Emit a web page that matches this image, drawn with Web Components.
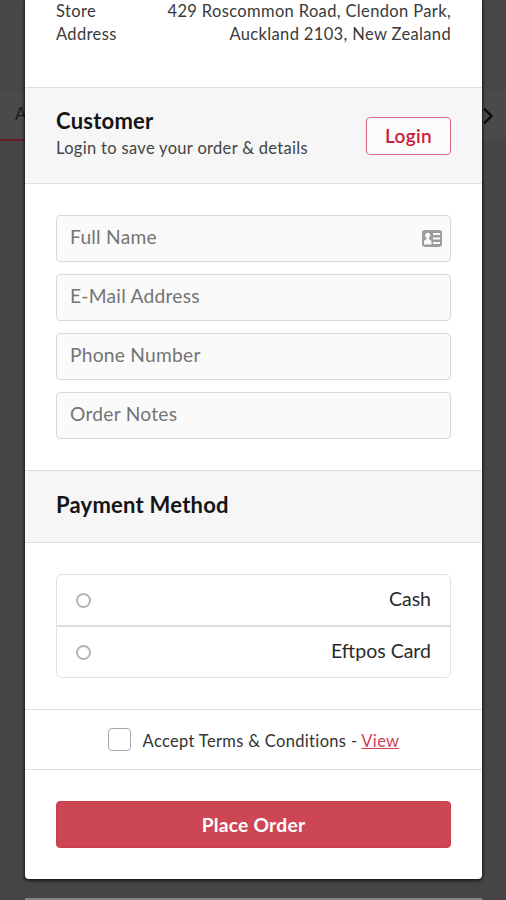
<!DOCTYPE html>
<html lang="en">
<head>
<meta charset="utf-8">
<title>Checkout</title>
<style>
    html, body {
        margin: 0;
        height: 100%;
        overflow: hidden;
    }

    body {
        font-family: Lato, "Liberation Sans", sans-serif;
        color: #222;
        background: #454545;
    }
</style>
</head>
<body>
<store-backdrop></store-backdrop>
<checkout-modal>
    <store-address label="Store Address">429 Roscommon Road, Clendon Park,<br>Auckland 2103, New Zealand</store-address>
    <section-header heading="Customer" style="height: 97px">
        <span slot="detail">Login to save your order &amp; details</span>
        <outline-button slot="action">Login</outline-button>
    </section-header>
    <field-list>
        <form-field icon>Full Name</form-field>
        <form-field>E-Mail Address</form-field>
        <form-field>Phone Number</form-field>
        <form-field>Order Notes</form-field>
    </field-list>
    <section-header heading="Payment Method" style="height: 73px"></section-header>
    <payment-options>
        <payment-option>Cash</payment-option>
        <payment-option>Eftpos Card</payment-option>
    </payment-options>
    <terms-row link="View">Accept Terms &amp; Conditions -</terms-row>
    <place-order>Place Order</place-order>
</checkout-modal>

<script>
function define(name, html) {
    customElements.define(name, class extends HTMLElement {
        constructor() {
            super();
            this.attachShadow({mode: "open"});
        }

        connectedCallback() {
            this.shadowRoot.innerHTML = `<style>:host, * { box-sizing: border-box; margin: 0; }</style>` + html(this);
        }
    });
}

// dimmed store page behind the dialog
define("store-backdrop", () => `
    <style>
    :host {
        display: flex;
        flex-direction: column;
        height: 900px;
        background: #454545;
    }

    .top {
        height: 88px;
        background: #474747;
    }

    .tabs {
        display: flex;
        justify-content: space-between;
        height: 54px;
        background: #4a4a4a;
        border-top: 1px solid #444;
        border-bottom: 1px solid #444;
    }

    .tab {
        width: 60px;
        padding: 15px 0 0 15px;
        font-size: 17px;
        line-height: 20px;
        color: #1b1b1b;
        border-bottom: 2px solid #681c26;
    }

    svg {
        margin: 17px 10px 0 0;
    }

    .next {
        height: 2px;
        margin: auto 24px 0 25px;
        background: #858585;
    }
    </style>
    <div class="top"></div>
    <div class="tabs">
        <span class="tab">A</span>
        <svg width="14" height="20" viewBox="0 0 14 20" fill="none" stroke="#080808" stroke-width="2.4">
            <path d="M2 2.500 9.500 10 2 17.500"/>
        </svg>
    </div>
    <div class="next"></div>
`);

define("checkout-modal", () => `
    <style>
    :host {
        position: absolute;
        top: 0;
        left: 25px;
        width: 457px;
        height: 879px;
        background: #fff;
        border-radius: 0 0 4px 4px;
        box-shadow: 0 1px 3px 1px rgba(0, 0, 0, 0.65);
    }
    </style>
    <slot></slot>
`);

define("store-address", el => `
    <style>
    :host {
        display: flex;
        justify-content: space-between;
        height: 87px;
        padding: 0 31px;
        font-size: 16.5px;
        letter-spacing: 0.36px;
        line-height: 23.4px;
        color: #3a3a3a;
    }

    .label {
        width: 80px;
    }

    .value {
        text-align: right;
        white-space: nowrap;
    }
    </style>
    <span class="label">${el.getAttribute("label")}</span>
    <span class="value"><slot></slot></span>
`);

define("section-header", el => `
    <style>
    :host {
        display: flex;
        align-items: center;
        justify-content: space-between;
        padding: 0 31px;
        background: #f6f6f6;
        border-top: 1px solid #dedede;
        border-bottom: 1px solid #dedede;
    }

    .titles {
        padding-bottom: 3px;
    }

    h2 {
        font-size: 22px;
        font-weight: 700;
        letter-spacing: 0.24px;
        line-height: 28px;
        color: #151515;
    }

    ::slotted([slot="detail"]) {
        display: block;
        font-size: 16.5px;
        letter-spacing: 0.32px;
        line-height: 26px;
        color: #444;
        white-space: nowrap;
    }

    ::slotted(outline-button) {
        margin-top: 1px;
    }
    </style>
    <div class="titles">
        <h2>${el.getAttribute("heading")}</h2>
        <slot name="detail"></slot>
    </div>
    <slot name="action"></slot>
`);

define("outline-button", () => `
    <style>
    :host {
        display: flex;
        align-items: center;
        justify-content: center;
        width: 85px;
        height: 38px;
        padding-bottom: 1px;
        border: 1px solid #d9667a;
        border-radius: 4px;
        background: #fbfbfb;
        color: #c8203c;
        font-size: 19px;
        font-weight: 600;
        letter-spacing: 0.3px;
    }
    </style>
    <slot></slot>
`);

define("field-list", () => `
    <style>
    :host {
        display: flex;
        flex-direction: column;
        gap: 12px;
        padding: 31px;
    }
    </style>
    <slot></slot>
`);

define("form-field", el => `
    <style>
    :host {
        display: flex;
        align-items: center;
        justify-content: space-between;
        height: 47px;
        padding: 0 8px 0 13px;
        border: 1px solid #d9d9d9;
        border-radius: 4px;
        background: #fafafa;
        color: #747474;
        font-size: 19.2px;
        letter-spacing: 0.25px;
    }

    span {
        padding-bottom: 4px;
    }
    </style>
    <span><slot></slot></span>
    ${el.hasAttribute("icon") ? `
    <svg width="20" height="17" viewBox="0 0 20 17">
        <rect width="20" height="17" rx="3" fill="#9c9c9c"/>
        <g fill="#fafafa">
            <circle cx="5.700" cy="5.300" r="2.500"/>
            <path d="M4.400 7h2.600v2.200l1.800 1q.7.4.7 1.300V14.500H2v-3q0-.9.700-1.300l1.700-1z"/>
            <rect x="11" y="3" width="7" height="2"/>
            <rect x="11" y="7.500" width="7" height="2"/>
            <rect x="11" y="12" width="7" height="2"/>
        </g>
    </svg>` : ""}
`);

define("payment-options", () => `
    <style>
    :host {
        display: block;
        padding: 31px;
    }

    .box {
        border: 1px solid #e0e0e0;
        border-radius: 6px;
    }

    ::slotted(payment-option:not(:first-child)) {
        height: 52px;
        border-top: 2px solid #dcdcdc;
    }
    </style>
    <div class="box"><slot></slot></div>
`);

define("payment-option", () => `
    <style>
    :host {
        display: flex;
        align-items: center;
        justify-content: space-between;
        height: 50px;
        padding: 0 19px;
        font-size: 19.500px;
        color: #2b2b2b;
    }

    i {
        width: 15px;
        height: 15px;
        border: 2px solid #b5b5b5;
        border-radius: 50%;
    }

    span {
        padding-bottom: 3px;
    }
    </style>
    <i></i>
    <span><slot></slot></span>
`);

define("terms-row", el => `
    <style>
    :host {
        display: flex;
        align-items: center;
        justify-content: center;
        height: 61px;
        border-top: 1px solid #dedede;
        border-bottom: 1px solid #dedede;
        font-size: 16.5px;
        letter-spacing: 0.33px;
        color: #333;
    }

    i {
        width: 23px;
        height: 23px;
        margin: 0 12px 1px 0;
        border: 1px solid #a8a8a8;
        border-radius: 4px;
    }

    span, a {
        padding-top: 2px;
    }

    a {
        margin-left: 4px;
        color: #cf3f56;
        text-decoration: underline;
    }
    </style>
    <i></i>
    <span><slot></slot></span>
    <a>${el.getAttribute("link")}</a>
`);

define("place-order", () => `
    <style>
    :host {
        display: block;
        padding: 31px;
    }

    button {
        display: block;
        width: 100%;
        height: 47px;
        padding: 0;
        border: 1px solid #cb3c4e;
        border-radius: 4px;
        background: #cd4654;
        color: #fff;
        font: 700 19.2px Lato, sans-serif;
        letter-spacing: 0.25px;
    }
    </style>
    <button><slot></slot></button>
`);
</script>
</body>
</html>
